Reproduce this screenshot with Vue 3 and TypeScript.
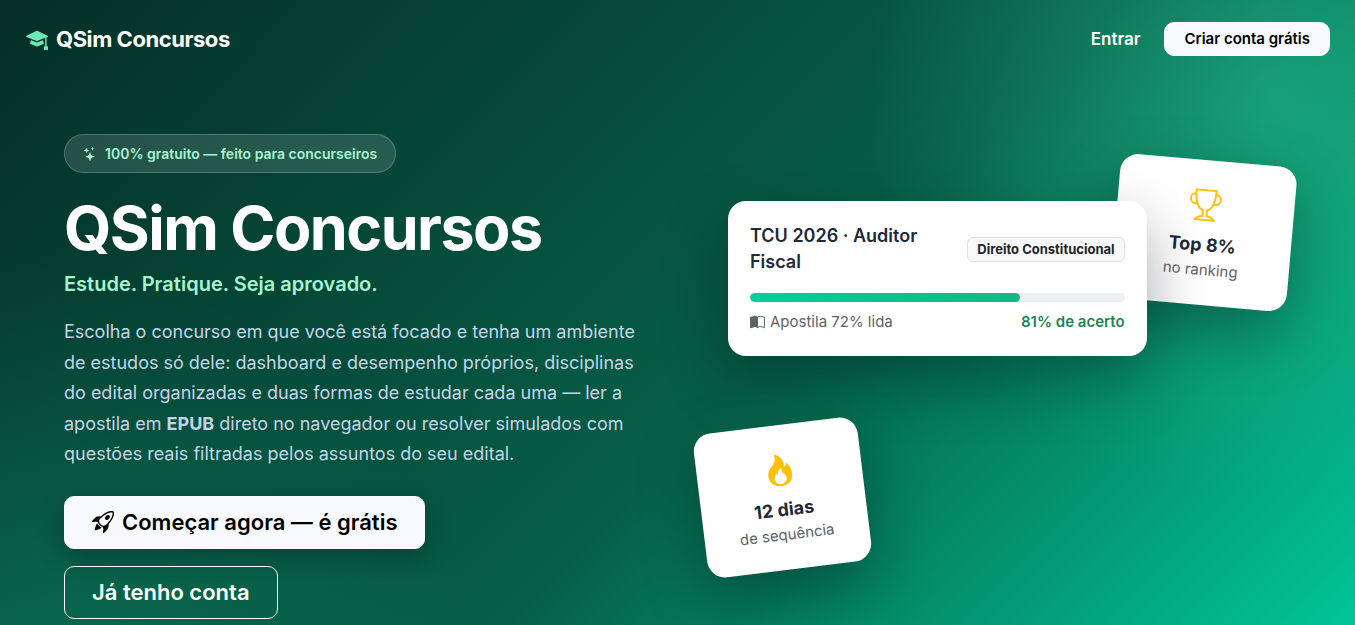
<script setup lang="ts">
import { ref } from 'vue'

const progress = ref(72)
const accuracy = ref(81)
</script>

<template>
  <div class="page">
    <header class="topbar">
      <a class="brand" href="#">
        <svg class="icon brand-icon" viewBox="0 0 16 16" aria-hidden="true">
          <path d="M8.211 2.047a.5.5 0 0 0-.422 0l-7.5 3.5a.5.5 0 0 0 .025.917l7.5 3a.5.5 0 0 0 .372 0L14 7.14V13a1 1 0 0 0-1 1v2h3v-2a1 1 0 0 0-1-1V6.739l.686-.275a.5.5 0 0 0 .025-.917z" />
          <path d="M4.176 9.032a.5.5 0 0 0-.656.327l-.5 1.7a.5.5 0 0 0 .294.605l4.5 1.8a.5.5 0 0 0 .372 0l4.5-1.8a.5.5 0 0 0 .294-.605l-.5-1.7a.5.5 0 0 0-.656-.327L8 10.466z" />
        </svg>
        <span>QSim Concursos</span>
      </a>
      <nav class="actions">
        <a class="login" href="#entrar">Entrar</a>
        <a class="btn btn-small" href="#criar">Criar conta grátis</a>
      </nav>
    </header>

    <main class="hero">
      <section class="intro">
        <span class="pill">
          <svg class="icon" viewBox="0 0 16 16" aria-hidden="true">
            <path d="M7.657 6.247c.11-.33.576-.33.686 0l.645 1.937a2.89 2.89 0 0 0 1.829 1.828l1.936.645c.33.11.33.576 0 .686l-1.937.645a2.89 2.89 0 0 0-1.828 1.829l-.645 1.936a.361.361 0 0 1-.686 0l-.645-1.937a2.89 2.89 0 0 0-1.828-1.828l-1.937-.645a.361.361 0 0 1 0-.686l1.937-.645a2.89 2.89 0 0 0 1.828-1.828zM3.794 1.148a.217.217 0 0 1 .412 0l.387 1.162c.173.518.579.924 1.097 1.097l1.162.387a.217.217 0 0 1 0 .412l-1.162.387A1.73 1.73 0 0 0 4.593 5.69l-.387 1.162a.217.217 0 0 1-.412 0L3.407 5.69A1.73 1.73 0 0 0 2.31 4.593l-1.162-.387a.217.217 0 0 1 0-.412l1.162-.387A1.73 1.73 0 0 0 3.407 2.31zM10.863.099a.145.145 0 0 1 .274 0l.258.774c.115.346.386.617.732.732l.774.258a.145.145 0 0 1 0 .274l-.774.258a1.16 1.16 0 0 0-.732.732l-.258.774a.145.145 0 0 1-.274 0l-.258-.774a1.16 1.16 0 0 0-.732-.732L9.1 2.137a.145.145 0 0 1 0-.274l.774-.258c.346-.115.617-.386.732-.732z" />
          </svg>
          100% gratuito — feito para concurseiros
        </span>
        <h1>QSim Concursos</h1>
        <p class="tagline">Estude. Pratique. Seja aprovado.</p>
        <p class="lead">
          Escolha o concurso em que você está focado e tenha um ambiente de estudos só dele:
          dashboard e desempenho próprios, disciplinas do edital organizadas e duas formas de
          estudar cada uma — ler a apostila em <strong>EPUB</strong> direto no navegador ou
          resolver simulados com questões reais filtradas pelos assuntos do seu edital.
        </p>
        <div class="cta">
          <a class="btn btn-large" href="#criar">
            <svg class="icon" viewBox="0 0 16 16" aria-hidden="true">
              <path d="M9.752 6.193c.599.6 1.73.437 2.528-.362s.96-1.932.362-2.531c-.599-.6-1.73-.438-2.528.361-.798.8-.96 1.933-.362 2.532" />
              <path d="M15.811 3.312c-.363 1.534-1.334 3.626-3.64 6.218l-.24 2.408a2.56 2.56 0 0 1-.732 1.526L8.817 15.85a.51.51 0 0 1-.867-.434l.27-1.899c.04-.28-.013-.593-.131-.956a9 9 0 0 0-.249-.657l-.082-.202c-.815-.197-1.578-.662-2.191-1.277-.614-.615-1.079-1.379-1.275-2.195l-.203-.083a10 10 0 0 0-.655-.248c-.363-.119-.675-.172-.955-.132l-1.896.27A.51.51 0 0 1 .15 7.17l2.382-2.386c.41-.41.947-.67 1.524-.734h.006l2.4-.238C9.005 1.55 11.087.582 12.623.208c.89-.217 1.59-.232 2.08-.188.244.023.435.06.57.093q.1.026.16.045c.184.06.279.13.351.295l.029.073a3.5 3.5 0 0 1 .157.721c.055.485.051 1.178-.159 2.065m-4.828 7.475.04-.04-.107 1.081a1.54 1.54 0 0 1-.44.913l-1.298 1.3.054-.38c.072-.506-.034-.993-.172-1.418a9 9 0 0 0-.164-.45c.738-.065 1.462-.38 2.087-1.006M5.205 5c-.625.626-.94 1.351-1.004 2.09a9 9 0 0 0-.45-.164c-.424-.138-.91-.244-1.416-.172l-.38.054 1.3-1.3c.245-.246.566-.401.91-.44l1.08-.107zm9.406-3.961c-.38-.034-.967-.027-1.746.163-1.558.38-3.917 1.496-6.937 4.521-.62.62-.799 1.34-.687 2.051.107.676.483 1.362 1.048 1.928.564.565 1.25.941 1.924 1.049.71.112 1.429-.067 2.048-.688 3.079-3.083 4.192-5.444 4.556-6.987.183-.771.18-1.345.138-1.713a3 3 0 0 0-.045-.283 3 3 0 0 0-.3-.041Z" />
              <path d="M7.009 12.139a7.6 7.6 0 0 1-1.804-1.352A7.6 7.6 0 0 1 3.794 8.86c-1.102.992-1.965 5.054-1.839 5.18.125.126 3.936-.896 5.054-1.902Z" />
            </svg>
            Começar agora — é grátis
          </a>
          <a class="btn btn-large btn-outline" href="#entrar">Já tenho conta</a>
        </div>
      </section>

      <section class="stage">
        <article class="card badge-card rank">
          <svg class="icon" viewBox="0 0 16 16" aria-hidden="true">
            <path d="M2.5.5A.5.5 0 0 1 3 0h10a.5.5 0 0 1 .5.5q0 .807-.034 1.536a3 3 0 1 1-1.133 5.89c-.79 1.865-1.878 2.777-2.833 3.011v2.173l1.425.356c.194.048.377.135.537.255L13.3 15.1a.5.5 0 0 1-.3.9H3a.5.5 0 0 1-.3-.9l1.838-1.379c.16-.12.343-.207.537-.255L6.5 13.11v-2.173c-.955-.234-2.043-1.146-2.833-3.012a3 3 0 1 1-1.132-5.89A33 33 0 0 1 2.5.5m.099 2.54a2 2 0 0 0 .72 3.935c-.333-1.05-.588-2.346-.72-3.935m10.083 3.935a2 2 0 0 0 .72-3.935c-.133 1.59-.388 2.885-.72 3.935M3.504 1q.01.775.056 1.469c.13 2.028.457 3.546.87 4.667C5.294 9.48 6.484 10 7 10a.5.5 0 0 1 .5.5v2.61a1 1 0 0 1-.757.97l-1.426.356a.5.5 0 0 0-.179.085L4.5 15h7l-.638-.479a.5.5 0 0 0-.18-.085l-1.425-.356a1 1 0 0 1-.757-.97V10.5A.5.5 0 0 1 9 10c.516 0 1.706-.52 2.57-2.864.413-1.12.74-2.64.87-4.667q.045-.694.056-1.469z" />
          </svg>
          <strong>Top 8%</strong>
          <span>no ranking</span>
        </article>

        <article class="card study">
          <div class="row">
            <h2>TCU 2026 · Auditor Fiscal</h2>
            <span class="subject">Direito Constitucional</span>
          </div>
          <div class="track" role="progressbar" aria-label="Apostila lida" :aria-valuenow="progress">
            <div class="fill" :style="{ width: progress + '%' }"></div>
          </div>
          <div class="row stats">
            <span class="read">
              <svg class="icon" viewBox="0 0 16 16" aria-hidden="true">
                <path d="M8.5 2.687c.654-.689 1.782-.886 3.112-.752 1.234.124 2.503.523 3.388.893v9.923c-.918-.35-2.107-.692-3.287-.81-1.094-.111-2.278-.039-3.213.492zM8 1.783C7.015.936 5.587.81 4.287.94c-1.514.153-3.042.672-3.994 1.105A.5.5 0 0 0 0 2.5v11a.5.5 0 0 0 .707.455c.882-.4 2.303-.881 3.68-1.02 1.409-.142 2.59.087 3.223.877a.5.5 0 0 0 .78 0c.633-.79 1.814-1.019 3.222-.877 1.378.139 2.8.62 3.681 1.02A.5.5 0 0 0 16 13.5v-11a.5.5 0 0 0-.293-.455c-.952-.433-2.48-.952-3.994-1.105C10.413.809 8.985.936 8 1.783" />
              </svg>
              Apostila {{ progress }}% lida
            </span>
            <span class="accuracy">{{ accuracy }}% de acerto</span>
          </div>
        </article>

        <article class="card badge-card streak">
          <svg class="icon" viewBox="0 0 16 16" aria-hidden="true">
            <path d="M8 16c3.314 0 6-2 6-5.5 0-1.5-.5-4-2.5-6 .25 1.5-1.25 2-1.25 2C11 4 9 .5 6 0c.357 2 .5 4-2 6-1.25 1-2 2.729-2 4.5C2 14 4.686 16 8 16m0-1c-1.657 0-3-1-3-2.75 0-.75.25-2 1.25-3C6.125 10 7 10.5 7 10.5c-.375-1.25.5-3.25 2-3.5-.179 1-.25 2 1 3 .625.5 1 1.364 1 2.25C11 14 9.657 15 8 15" />
          </svg>
          <strong>12 dias</strong>
          <span>de sequência</span>
        </article>
      </section>
    </main>
  </div>
</template>

<style>
body {
  margin: 0;
  background: #065f46;
}
</style>

<style scoped>
.page {
  box-sizing: border-box;
  min-height: 100vh;
  overflow: hidden;
  font-family: Inter, "Liberation Sans", sans-serif;
  font-size: 17px;
  line-height: 26px;
  color: #fff;
  background:
    radial-gradient(circle at 94% 14%, rgba(52, 211, 153, 0.4), transparent 29%),
    radial-gradient(circle at 2% 105%, rgba(16, 185, 129, 0.3), transparent 30%),
    linear-gradient(135deg, #052e27 0%, #065f46 55%, #00cc9c 100%);
}

.page *,
.page *::before {
  box-sizing: border-box;
}

.icon {
  width: 1em;
  height: 1em;
  fill: currentColor;
  flex: none;
}

a {
  color: inherit;
  text-decoration: none;
}

.topbar {
  display: flex;
  align-items: center;
  justify-content: space-between;
  padding: 22px 25px 0 26px;
}

.brand {
  display: flex;
  align-items: center;
  gap: 8px;
  font-size: 22px;
  font-weight: 700;
  line-height: 32px;
  letter-spacing: -0.02em;
}

.brand-icon {
  color: #6ee7b7;
}

.actions {
  display: flex;
  align-items: center;
  gap: 24px;
  font-weight: 600;
}

.btn {
  display: inline-flex;
  align-items: center;
  gap: 8px;
  border: 1px solid #f8f9fc;
  border-radius: 10px;
  background: #f8f9fc;
  color: #000;
  font-weight: 600;
}

.btn-small {
  padding: 4px 19px;
  font-size: 15px;
  line-height: 24px;
}

.btn-large {
  padding: 9px 27px;
  font-size: 22px;
  line-height: 33px;
  box-shadow: 0 8px 24px rgba(0, 0, 0, 0.25);
}

.btn-outline {
  background: transparent;
  color: #fff;
  box-shadow: none;
}

.hero {
  display: grid;
  grid-template-columns: 1fr 1fr;
  align-items: center;
  gap: 48px;
  padding: 78px 64px 64px;
}

.pill {
  display: inline-flex;
  align-items: center;
  gap: 8px;
  padding: 6px 18px;
  border: 1px solid rgba(255, 255, 255, 0.2);
  border-radius: 20px;
  background: rgba(255, 255, 255, 0.13);
  color: #a7f3d0;
  font-size: 14px;
  font-weight: 600;
  line-height: 25px;
}

h1 {
  margin: 22px 0 0;
  font-size: 61px;
  font-weight: 700;
  line-height: 66px;
  letter-spacing: -0.025em;
}

.tagline {
  margin: 8px 0 0;
  color: #a7f3d0;
  font-size: 20px;
  font-weight: 600;
  line-height: 30px;
}

.lead {
  margin: 18px 0 26px;
  color: #c5d3e8;
  font-size: 18px;
  line-height: 1.7;
}

.cta {
  display: flex;
  flex-wrap: wrap;
  gap: 17px;
}

.stage {
  position: relative;
  height: 432px;
}

.card {
  position: absolute;
  border-radius: 18px;
  background: #fff;
  color: #1e293b;
  box-shadow: 0 24px 60px rgba(0, 10, 20, 0.35);
}

.study {
  top: 41px;
  left: 4.5%;
  width: 71%;
  padding: 22px;
}

.row {
  display: flex;
  align-items: center;
  justify-content: space-between;
}

h2 {
  margin: 0;
  max-width: 180px;
  font-size: 18px;
  font-weight: 600;
  line-height: 26px;
}

.subject {
  padding: 4px 9px;
  border: 1px solid #dee2e6;
  border-radius: 6px;
  background: #f8f9fc;
  color: #212529;
  font-size: 13px;
  font-weight: 700;
  line-height: 15px;
}

.track {
  height: 9px;
  margin: 18px 0 8px;
  overflow: hidden;
  border-radius: 5px;
  background: #edf0f5;
}

.fill {
  height: 100%;
  border-radius: 5px;
  background: linear-gradient(135deg, #00d09c, #10b981);
}

.stats {
  font-size: 15px;
  line-height: 24px;
}

.read {
  display: flex;
  align-items: center;
  gap: 5px;
  color: #5c636a;
}

.accuracy {
  color: #198754;
  font-weight: 600;
}

.badge-card {
  display: flex;
  flex-direction: column;
  align-items: center;
  padding: 29px 35px 24px;
}

.badge-card .icon {
  margin-bottom: 11px;
  color: #ffc107;
  font-size: 32px;
}

.badge-card strong {
  font-size: 18px;
}

.badge-card span {
  color: #5c636a;
  font-size: 15px;
  line-height: 23px;
}

.rank {
  top: 0;
  right: -1px;
  width: 30%;
  transform: rotate(5deg);
}

.streak {
  bottom: 22px;
  left: -2px;
  transform: rotate(-7deg);
}
</style>
